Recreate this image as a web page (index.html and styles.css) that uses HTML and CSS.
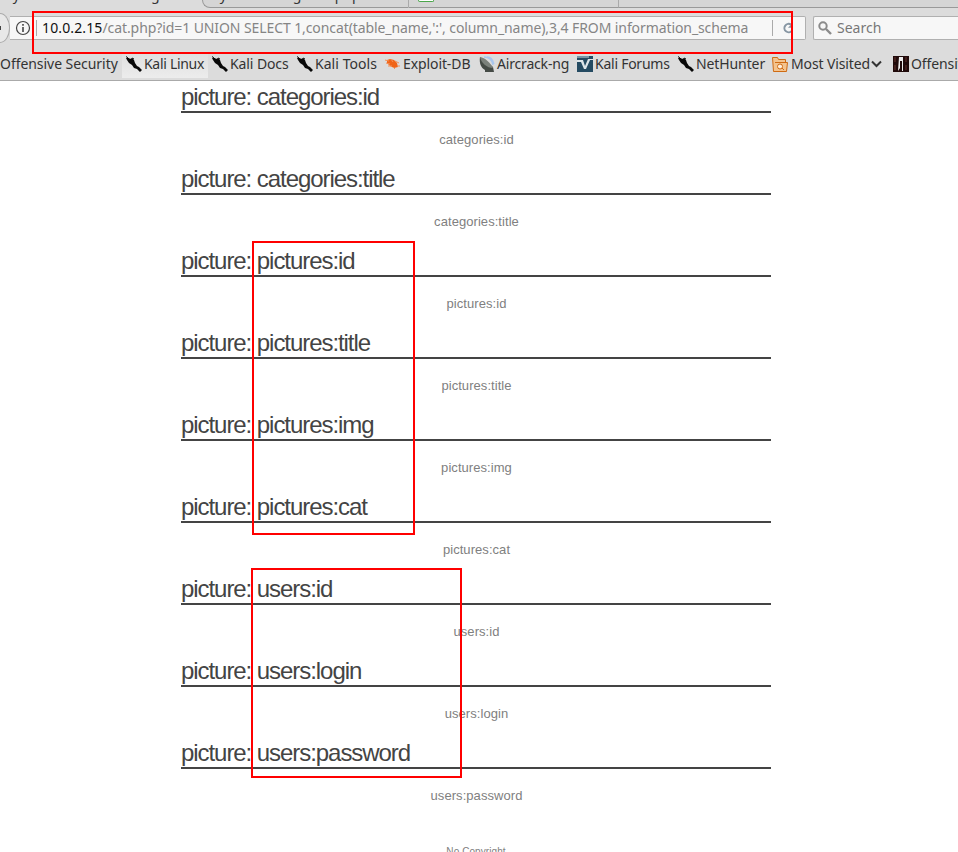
FILE: index.html
```html
<!DOCTYPE html>
<html lang="en"><head><meta charset="utf-8"><title>My Awesome Photoblog</title><link rel="stylesheet" href="styles.css"></head>
<body>
<svg class="defs" aria-hidden="true"><symbol id="kali" viewBox="0 0 16 16"><path d="M0 2h3l1 1 2-1 2 2 1 3 2 3 2 1 3 3-1 1-1 1-3-3-3-1-2-3-3-2-2-3z" fill="#080808"/><path d="M0 .5l2 1.500M6 2l2 1" stroke="#080808"/></symbol></svg>
<header class="chrome">
 <div class="tabs"><div class="tab first"><span>My Awesome Photoblog</span></div><div class="tab second"><span>Try something else php</span></div><div class="tab third"><i class="fav"></i></div><div class="tab rest"></div></div>
 <div class="nav">
  <div class="back"><i></i></div>
  <div class="address"><svg class="info" viewBox="0 0 16 16"><circle cx="8" cy="8" r="6.5" fill="none" stroke="#444" stroke-width="1.2"/><path d="M8 7v5M8 4v1.7" stroke="#444" stroke-width="1.6"/></svg><span class="sep"></span><span class="url"><b>10.0.2.15</b>/cat.php?id=1 UNION SELECT 1,concat(table_name,':', column_name),3,4 FROM information_schema</span><span class="sep end"></span><svg class="reload" viewBox="0 0 14 14"><path d="M9.8 9.8A4.2 4.2 0 1 1 9 3.6" fill="none" stroke="#8796a3" stroke-width="2"/><path d="M6 6.8h5V1.5z" fill="#8796a3"/></svg></div>
  <div class="search"><svg viewBox="0 0 14 14"><circle cx="5" cy="5" r="3.7" fill="none" stroke="#8b8b8b" stroke-width="2"/><path d="M8 8l5 5" stroke="#8b8b8b" stroke-width="2.4"/></svg><span>Search</span></div>
 </div>
 <nav class="bookmarks">
  <a class="m1"><span>Offensive Security</span></a>
  <a class="m2"><svg><use href="#kali"/></svg><span>Kali Linux</span></a>
  <a class="m3"><svg><use href="#kali"/></svg><span>Kali Docs</span></a>
  <a class="m4"><svg><use href="#kali"/></svg><span>Kali Tools</span></a>
  <a class="m5"><svg viewBox="0 0 16 16"><path d="M2 4l3-1 4 1 3 3 1 4-4 1-4-2-3-3z" fill="#f06418"/><path d="M1 7l4 1M3 10l4 0M6 3l2 3M10 5l4 2M8 11l2 2M0 4l4 1M12 10l3 0" stroke="#f39057"/></svg><span>Exploit-DB</span></a>
  <a class="m6"><svg viewBox="0 0 16 16"><path d="M1 1c-1 6 1 11 5 13v2h9l-1-5z" fill="#454b46"/><path d="M1 1c5 1 10 5 13 11-6 0-12-5-13-11z" fill="#7b817b"/><path d="M5 1c5 0 8 3 9 8M8 1c4 0 6 3 7 7" fill="none" stroke="#a9c6ed" stroke-width="1.3"/></svg><span>Aircrack-ng</span></a>
  <a class="m7"><svg viewBox="0 0 16 16"><path d="M0 0h16v16H0z" fill="#254b62"/><path d="M0 4h6l2 6 3-7h5v1h-3L9 13H7L4 6H0z" fill="#dce5e9"/><path d="M0 0h12v2H0z" fill="#7894a4"/></svg><span>Kali Forums</span></a>
  <a class="m8"><svg><use href="#kali"/></svg><span>NetHunter</span></a>
  <a class="m9"><svg viewBox="0 0 16 16"><path d="M.5 1.5h5l1 2h7v3h2l-1 9h-13z" fill="#f4c48f" stroke="#cf6b13"/><path d="M3 6.5h12" stroke="#cf6b13"/><circle cx="8" cy="10.5" r="2.5" fill="#fff0df" stroke="#cf6b13"/><path d="M10 12l2 2" stroke="#cf6b13"/></svg><span>Most Visited</span><svg class="chev" viewBox="0 0 10 8"><path d="M.5 1.5L5 6l4.500-4.500" fill="none" stroke="#333" stroke-width="2"/></svg></a>
  <a class="m10"><svg viewBox="0 0 16 16"><path d="M0 0h16v16H0z" fill="#210b0b"/><path d="M6 1h4v14H9V5H7v7l-2 3z" fill="#eee"/><path d="M2 1v5M13 1v5M2 9v5M13 9v5" stroke="#65332f"/></svg><span>Offensive Security</span></a>
 </nav>
</header>
<main>
<article><h2>picture: categories:id</h2><p>categories:id</p></article>
<article><h2>picture: categories:title</h2><p>categories:title</p></article>
<article><h2>picture: pictures:id</h2><p>pictures:id</p></article>
<article><h2>picture: pictures:title</h2><p>pictures:title</p></article>
<article><h2>picture: pictures:img</h2><p>pictures:img</p></article>
<article><h2>picture: pictures:cat</h2><p>pictures:cat</p></article>
<article><h2>picture: users:id</h2><p>users:id</p></article>
<article><h2>picture: users:login</h2><p>users:login</p></article>
<article><h2>picture: users:password</h2><p>users:password</p></article>
<footer>No Copyright</footer>
</main>
<div class="mark mark-url"></div><div class="mark mark-pictures"></div><div class="mark mark-users"></div>
</body></html>
```
FILE: styles.css
```css
*{box-sizing:border-box}
body{margin:0;width:958px;height:852px;overflow:hidden;position:relative;background:#fff;font-family:"Liberation Sans",sans-serif}
.defs{display:none}
.chrome{height:81px;background:#dcdcdc;border-bottom:1px solid #aaa;font:14px/20px "Noto Sans",sans-serif;color:#333;overflow:hidden}
.tabs{height:8px;display:flex;overflow:hidden}
.tab{height:8px;border-bottom:1px solid #999;background:#d5d5d5;flex:none;overflow:hidden}
.tab span{display:block;margin-top:-15px;white-space:nowrap}
.first{width:202px;border:0;background:#dcdcdc}
.second{width:207px;border-left:1px solid #999;border-right:1px solid #aaa;border-bottom-left-radius:8px;padding-left:4px}
.third{width:210px;border-right:1px solid #aaa;padding-left:9px}
.fav{display:block;width:16px;height:2px;border:1px solid #4ba64b;border-top:0;border-radius:0 0 2px 2px;background:#fff}
.rest{flex:1}
.nav{height:40px;display:flex;align-items:center}
.back{width:10px;height:30px;border:1px solid #aaa;border-left:0;border-radius:0 10px 10px 0/0 15px 15px 0;background:#e8e8e8;display:flex;align-items:center}
.back i{width:1px;height:4px;background:#444}
.address{width:796px;height:24px;border:1px solid #b0b0b0;border-left:0;border-radius:0 2px 2px 0;background:#f7f7f7;display:flex;align-items:center}
.info{width:16px;height:16px;margin-left:5px;flex:none}
.sep{width:1px;height:16px;background:#aaa;margin-left:5px;flex:none}
.url{width:730px;margin-left:5px;color:#858585;white-space:nowrap;letter-spacing:-.09px}
.url b{font-weight:400;color:#111;letter-spacing:.13px}
.sep.end{margin-left:0}
.reload{width:14px;height:14px;margin-left:9px}
.search{width:145px;height:24px;margin-left:7px;border:1px solid #b0b0b0;border-right:0;border-radius:2px 0 0 2px;background:#f7f7f7;display:flex;align-items:center;color:#777}
.search svg{width:14px;height:14px;margin:0 5px 0 4px}
.bookmarks{height:32px;display:flex;align-items:center;white-space:nowrap;letter-spacing:-.1px}
.bookmarks a{display:flex;align-items:center;flex:none;height:27px;gap:2px}
.bookmarks svg{width:16px;height:16px;flex:none}
.m1{width:122px;letter-spacing:-.05px}.m2{width:86px;padding-left:4px;background:linear-gradient(#dedede,#ececec);letter-spacing:-.3px}.m3{width:89px;padding-left:4px}.m4{width:88px;letter-spacing:.05px}.m5{width:94px}.m6{width:98px;letter-spacing:-.18px}.m7{width:101px;letter-spacing:-.25px}.m8{width:94px}.m9{width:121px}.m10{width:140px}
.bookmarks .m9{gap:3px;letter-spacing:-.12px}
.bookmarks .chev{width:11px;height:8px;margin-left:-2px}
main{width:590px;margin:0 0 0 181px}
article{height:82px}
h2{height:32px;margin:0;border-bottom:2px solid #444;font-size:24px;font-weight:400;line-height:32px;letter-spacing:-1.06px;color:#444}
p{margin:19px 0 0 1px;font-size:13px;line-height:16px;text-align:center;letter-spacing:.06px;color:#808080}
footer{text-align:center;font-size:10px;line-height:12px;padding-top:27px;letter-spacing:.08px;color:#808080}
.mark{position:absolute;border:2px solid red}
.mark-url{left:32px;top:11px;width:761px;height:43px}
.mark-pictures{left:252px;top:241px;width:163px;height:294px}
.mark-users{left:251px;top:568px;width:211px;height:210px}
```
